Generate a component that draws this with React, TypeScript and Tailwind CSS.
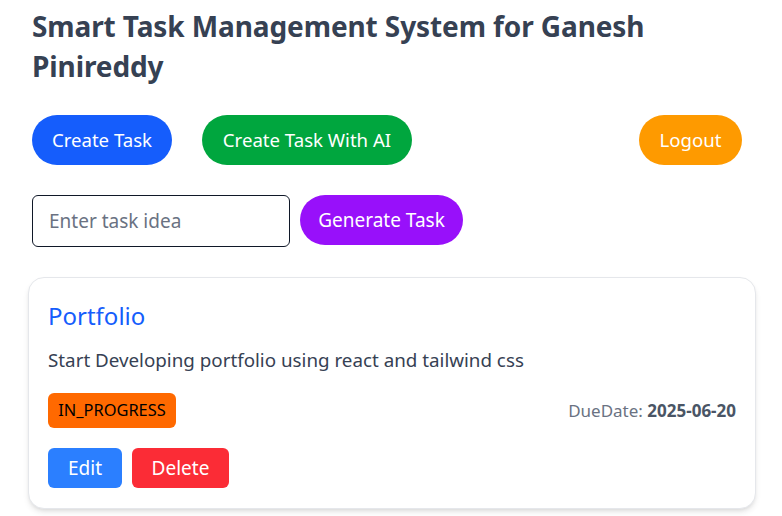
import React from "react";

export default function App() {
  return (
    <div className="min-h-screen bg-white pl-8 pr-10 pt-1.5 font-['Noto_Sans',sans-serif]">
      <h1 className="text-[28px] leading-10 font-bold text-gray-700 tracking-[-0.1px]">
        Smart Task Management System for Ganesh Pinireddy
      </h1>

      <div className="mt-[29px] flex items-center justify-between">
        <div className="flex items-center gap-[30px]">
          <button className="h-[50px] w-[140px] rounded-full bg-blue-600 text-[18.6px] text-white">
            Create Task
          </button>
          <button className="h-[50px] w-[210px] rounded-full bg-green-600 text-[18.6px] text-white">
            Create Task With AI
          </button>
        </div>
        <button className="h-[50px] w-[103px] rounded-full bg-amber-500 text-[18.6px] text-white">
          Logout
        </button>
      </div>

      <div className="mt-[30px] flex items-start gap-[10px]">
        <input
          className="h-[52px] w-[258px] rounded-md border border-gray-900 px-4 text-[19px] text-gray-800 placeholder:text-gray-500 outline-none"
          placeholder="Enter task idea"
        />
        <button className="h-[50px] w-[163px] rounded-full bg-purple-600 text-[19px] text-white">
          Generate Task
        </button>
      </div>

      <div className="mt-[30px] -ml-1 w-[728px] rounded-2xl border border-gray-200 bg-white px-[19px] pt-[22px] pb-5 shadow-md">
        <h2 className="text-2xl leading-8 text-blue-600">Portfolio</h2>
        <p className="mt-[14px] text-[18.8px] leading-7 text-gray-700">
          Start Developing portfolio using react and tailwind css
        </p>
        <div className="mt-[19px] flex items-center justify-between">
          <span className="flex h-[35px] w-[128px] items-center justify-center rounded-md bg-orange-500 text-[16.4px] text-black">
            IN_PROGRESS
          </span>
          <span className="text-[17px] text-gray-500">
            DueDate: <span className="font-bold text-gray-600">2025-06-20</span>
          </span>
        </div>
        <div className="mt-5 flex items-center gap-[10px]">
          <button className="h-10 w-[74px] rounded-md bg-blue-500 text-[19px] text-white">Edit</button>
          <button className="h-10 w-[97px] rounded-md bg-red-500 text-[19px] text-white">Delete</button>
        </div>
      </div>
    </div>
  );
}
